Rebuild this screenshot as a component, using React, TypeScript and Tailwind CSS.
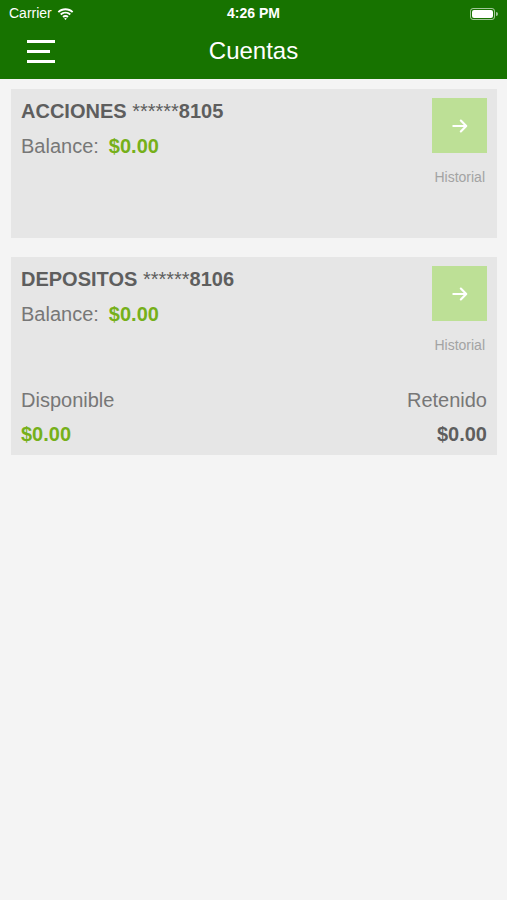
const FONT = { fontFamily: '"Liberation Sans", Arial, sans-serif' };

function StatusBar() {
  return (
    <div className="relative flex h-[27px] items-center px-[9px] text-white">
      <div className="flex items-center gap-[5px] text-[14px]">
        <span>Carrier</span>
        <svg width="17" height="12" viewBox="0 0 17 12" fill="white">
          <path d="M8.5 2.2c2.5 0 4.8 1 6.5 2.6l1.3-1.4C14.3 1.4 11.5.2 8.5.2S2.7 1.4.7 3.4L2 4.8c1.7-1.6 4-2.6 6.5-2.6z" />
          <path d="M8.5 5.6c1.6 0 3 .6 4.1 1.6l1.3-1.4C12.5 4.5 10.6 3.7 8.5 3.7S4.5 4.5 3.1 5.8l1.3 1.4c1.1-1 2.5-1.6 4.1-1.6z" />
          <path d="M8.5 9c.7 0 1.3.3 1.8.7l1.3-1.4c-.8-.8-1.9-1.2-3.1-1.2s-2.3.4-3.1 1.2l1.3 1.4c.5-.4 1.1-.7 1.8-.7zM8.5 12l1.4-1.5c-.4-.3-.9-.5-1.4-.5s-1 .2-1.4.5z" />
        </svg>
      </div>
      <div className="absolute left-1/2 -translate-x-1/2 text-[14px] font-bold">4:26 PM</div>
      <div className="ml-auto flex items-center">
        <div className="h-[12px] w-[25px] rounded-[3px] border border-white/60 p-[1px]">
          <div className="h-full w-full rounded-[2px] bg-white" />
        </div>
        <div className="ml-[1px] h-[4px] w-[2px] rounded-r-sm bg-white/60" />
      </div>
    </div>
  );
}

function NavBar() {
  return (
    <div className="relative flex h-[52px] items-center px-[27px] pb-[3px]">
      <div className="flex w-[28px] flex-col gap-[7px]">
        <div className="h-[3px] w-full bg-white" />
        <div className="h-[3px] w-[23px] bg-white" />
        <div className="h-[3px] w-full bg-white" />
      </div>
      <div className="absolute left-1/2 top-[9px] -translate-x-1/2 text-[24px] leading-[30px] text-white">Cuentas</div>
    </div>
  );
}

function HistoryButton() {
  return (
    <div className="flex flex-col items-end">
      <div className="flex h-[55px] w-[55px] items-center justify-center bg-[#bde096]">
        <svg width="20" height="20" viewBox="0 0 24 24" fill="none" stroke="white" strokeWidth="2.6" strokeLinecap="round" strokeLinejoin="round">
          <path d="M4 12h15M13 5.5l6.5 6.5-6.5 6.5" />
        </svg>
      </div>
      <div className="mt-[14px] pr-[2px] text-[14px] text-[#a3a3a3]">Historial</div>
    </div>
  );
}

function AccountCard({ name, number, extra }: { name: string; number: string; extra?: boolean }) {
  return (
    <div className={`bg-[#e6e6e6] pl-[10px] pr-[10px] pt-[9px] ${extra ? 'pb-[9px]' : 'h-[149px]'}`}>
      <div className="flex justify-between">
        <div className="pt-[1px]">
          <div className="text-[20px] font-bold leading-[24px] text-[#5e5e5e]">
            {name} <span className="font-normal">******</span>{number}
          </div>
          <div className="mt-[11px] flex items-baseline gap-[10px] text-[20px] leading-[24px]">
            <span className="text-[#777777]">Balance:</span>
            <span className="font-bold text-[#76b01a]">$0.00</span>
          </div>
        </div>
        <HistoryButton />
      </div>
      {extra && (
        <div className="mt-[32px] flex justify-between text-[20px]">
          <div className="flex flex-col">
            <span className="leading-[24px] text-[#777777]">Disponible</span>
            <span className="mt-[10px] font-bold leading-[24px] text-[#76b01a]">$0.00</span>
          </div>
          <div className="flex flex-col items-end">
            <span className="leading-[24px] text-[#777777]">Retenido</span>
            <span className="mt-[10px] font-bold leading-[24px] text-[#5e5e5e]">$0.00</span>
          </div>
        </div>
      )}
    </div>
  );
}

export default function App() {
  return (
    <div className="flex h-[900px] w-[507px] flex-col bg-[#f4f4f4]" style={FONT}>
      <div className="bg-[#177300]">
        <StatusBar />
        <NavBar />
      </div>
      <div className="flex flex-col gap-[19px] pl-[11px] pr-[10px] pt-[10px]">
        <AccountCard name="ACCIONES" number="8105" />
        <AccountCard name="DEPOSITOS" number="8106" extra />
      </div>
    </div>
  );
}
